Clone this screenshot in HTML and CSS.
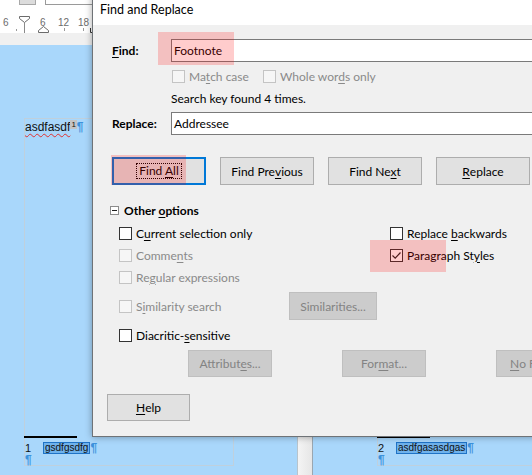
FILE: index.html
```
<!DOCTYPE html>
<html>
<head>
<meta charset="utf-8">
<link rel="stylesheet" href="styles.css">
</head>
<body>
<div class="screen">
  <div class="topbar">
    <span class="tb-btn"></span>
    <span class="tb-field"></span>
  </div>
  <div class="ruler">
    <span class="rl-num n1">6</span>
    <span class="rl-num n2">6</span>
    <span class="rl-num n3">12</span>
    <span class="rl-num n4">18</span>
    <svg class="rl-marks" width="92" height="17" viewBox="0 0 92 17">
      <path d="M19.5 0.5 H29.5 V2.5 L24.5 6.5 L19.5 2.5 Z" fill="#fff" stroke="#6b6b6b"/>
      <path d="M24.5 6.5 V17" stroke="#8a8a8a"/>
      <path d="M38.5 16.5 H48.5 V14.5 L43.5 10.5 L38.5 14.5 Z" fill="#fff" stroke="#6b6b6b"/>
      <path d="M64.5 12 V15 M83.5 12 V15 M16.5 13 V15" stroke="#9a9a9a"/>
      <path d="M90.5 12 V16.5 H92" stroke="#333" fill="none"/>
    </svg>
  </div>
  <div class="rulerfoot"></div>
  <div class="doc">
    <div class="page p1">
      <div class="ptext"><span class="wavy">asdfasdf</span><span class="fn-anchor">1</span><span class="pil">¶</span></div>
      <div class="footnotes">
        <div class="fn-sep"></div>
        <div class="fn-line"><span class="fn-num">1</span><span class="sel">gsdfgsdfg</span><span class="pil">¶</span></div>
        <div class="fn-line"><span class="pil">¶</span></div>
      </div>
    </div>
    <div class="pagegap"></div>
    <div class="page p2">
      <div class="ptext"></div>
      <div class="footnotes">
        <div class="fn-sep"></div>
        <div class="fn-line"><span class="fn-num">2</span><span class="sel">asdfgasasdgas</span><span class="pil">¶</span></div>
        <div class="fn-line"><span class="pil">¶</span></div>
      </div>
    </div>
  </div>

  <div class="dialog">
    <div class="titlebar">Find and Replace</div>
    <div class="dbody">
      <div class="frow">
        <span class="flabel"><u>F</u>ind:</span>
        <div class="field">Footnote</div>
      </div>
      <div class="optrow">
        <span class="chk mc"><span class="box dis"></span><span class="dtxt">Ma<u>t</u>ch case</span></span>
        <span class="chk"><span class="box dis"></span><span class="dtxt">Whole wor<u>d</u>s only</span></span>
      </div>
      <div class="status">Search key found 4 times.</div>
      <div class="frow">
        <span class="flabel">Replace:</span>
        <div class="field">Addressee</div>
      </div>
      <div class="btnrow">
        <span class="btn focus"><span class="focusring">Find <u>A</u>ll</span></span>
        <span class="btn">Find Pre<u>v</u>ious</span>
        <span class="btn">Find Ne<u>x</u>t</span>
        <span class="btn"><u>R</u>eplace</span>
      </div>
      <div class="section"><span class="minus"></span><span class="sect-title">Other <u>o</u>ptions</span></div>
      <div class="checks">
        <span class="chk c1 r1"><span class="box"></span><span>C<u>u</u>rrent selection only</span></span>
        <span class="chk c3 r1"><span class="box"></span><span>Replace <u>b</u>ackwards</span></span>
        <span class="chk c1 r2"><span class="box dis"></span><span class="dtxt">Comme<u>n</u>ts</span></span>
        <span class="chk c3 r2"><span class="box"><svg width="11" height="11" viewBox="0 0 11 11"><path d="M1.5 5.5 L4.2 8.2 L9.5 2.5" fill="none" stroke="#222" stroke-width="1.2"/></svg></span><span>Paragraph St<u>y</u>les</span></span>
        <span class="chk c1 r3"><span class="box dis"></span><span class="dtxt">Re<u>g</u>ular expressions</span></span>
        <span class="chk c1 r4"><span class="box dis"></span><span class="dtxt">S<u>i</u>milarity search</span></span>
        <span class="btn dbtn sim c2 r4">Similarities...</span>
        <span class="chk c1 r5"><span class="box"></span><span>Diacritic-<u>s</u>ensitive</span></span>
      </div>
      <div class="btnrow2">
        <span class="btn dbtn b2">Attribut<u>e</u>s...</span>
        <span class="btn dbtn b2">For<u>m</u>at...</span>
        <span class="btn dbtn b2 nof"><u>N</u>o Format</span>
      </div>
      <div class="helprow">
        <span class="btn help"><u>H</u>elp</span>
      </div>
    </div>
    <div class="hl hl1"></div>
    <div class="hl hl2"></div>
    <div class="hl hl3"></div>
  </div>
</div>
</body>
</html>
```

FILE: styles.css
```
* { box-sizing: border-box; }
html, body { margin: 0; padding: 0; }
body { background: #a9d7fb; }
.screen {
  position: relative;
  width: 532px;
  height: 475px;
  overflow: hidden;
  font-family: Lato, "Open Sans", sans-serif;
  font-size: 12px;
  color: #000;
}
u { text-decoration-thickness: 1px; text-underline-offset: 2px; }

/* app chrome behind */
.topbar {
  height: 16px;
  background: #fff;
  display: flex;
  align-items: flex-start;
}
.tb-btn {
  margin-left: 19px;
  width: 17px;
  height: 5px;
  background: #dcdcdc;
  border: 1px solid #a8a8a8;
  border-top: none;
}
.tb-field {
  margin-left: 9px;
  width: 60px;
  height: 5px;
  background: #fff;
  border-left: 1px solid #9a9a9a;
  border-bottom: 1px solid #9a9a9a;
}
.ruler {
  position: relative;
  height: 17px;
  background: #fff;
}
.rl-num {
  position: absolute;
  top: 2px;
  font-family: "Liberation Sans", sans-serif;
  font-size: 10px;
  line-height: 10px;
  color: #6c6c6c;
}
.n1 { left: 3px; }
.n2 { left: 40px; }
.n3 { left: 58px; }
.n4 { left: 78px; }
.rl-marks { position: absolute; left: 0; top: 0; }
.rulerfoot { height: 12px; background: #f0f0f0; }

.doc {
  height: 430px;
  background: #a9d7fb;
  display: flex;
  align-items: flex-start;
}
.page {
  flex: none;
  margin-top: 73px;
  height: 348px;
  border: 1px solid #bfd0dd;
  display: flex;
  flex-direction: column;
  justify-content: space-between;
  font-family: "Liberation Sans", sans-serif;
}
.p1 { margin-left: 24px; width: 210px; }
.p2 { margin-left: 64px; width: 200px; border-right: none; }
.pagegap {
  flex: none;
  margin-left: 63px;
  width: 16px;
  height: 430px;
  background: linear-gradient(to right, #f4f4f4, #e6e6e6);
  border-left: 1px solid #b8c4cc;
  border-right: 1px solid #9aa6b0;
}
.ptext {
  padding-top: 1px;
  font-size: 12px;
  line-height: 14px;
  color: #111;
  white-space: nowrap;
}
.wavy {
  text-decoration: underline wavy #e03030;
  text-decoration-thickness: 1px;
  text-underline-offset: 2px;
  text-decoration-skip-ink: none;
}
.fn-anchor {
  display: inline-block;
  background: #c4c4c4;
  font-size: 8px;
  line-height: 9px;
  vertical-align: 4px;
  padding: 0 1px;
}
.pil { color: #3d92dc; font-weight: bold; font-size: 12px; }
.footnotes { display: flex; flex-direction: column; }
.fn-sep { width: 53px; height: 2px; background: #000; margin-left: -1px; }
.fn-line {
  display: flex;
  align-items: center;
  font-size: 10px;
  line-height: 10px;
  color: #111;
  height: 11px;
  white-space: nowrap;
}
.fn-sep + .fn-line { margin-top: 4px; height: 12px; }
.fn-num { width: 18px; font-size: 11px; }
.sel {
  background: #6fb2ec;
  border: 1px solid #1f73c6;
  padding: 0 1px;
  height: 12px;
  line-height: 10px;
}

/* dialog */
.dialog {
  position: absolute;
  left: 92px;
  top: -6px;
  width: 480px;
  border: 1px solid #6f7377;
  background: #f0f0f0;
  box-shadow: 0 0 7px rgba(0, 0, 0, 0.35);
}
.titlebar {
  height: 30px;
  background: #fff;
  padding-left: 7px;
  line-height: 30px;
  font-size: 12.5px;
}
.dbody {
  padding: 14px 0 15px 19px;
  display: flex;
  flex-direction: column;
  align-items: flex-start;
}
.frow {
  display: grid;
  grid-template-columns: 59px 1fr;
  align-items: center;
  height: 23px;
  width: 100%;
}
.flabel { font-weight: bold; }
.field {
  height: 23px;
  border: 1px solid #7a7a7a;
  background: #fff;
  padding-left: 2px;
  line-height: 21px;
}
.optrow {
  margin-top: 7px;
  margin-left: 60px;
  height: 14px;
  display: flex;
  align-items: center;
}
.chk { display: flex; align-items: center; gap: 4px; white-space: nowrap; }
.mc { width: 91px; }
.box {
  width: 13px;
  height: 13px;
  flex: none;
  border: 1px solid #333;
  background: #fff;
  display: flex;
  align-items: center;
  justify-content: center;
}
.box.dis { border-color: #c4c4c4; background: #f6f6f6; }
.dtxt { color: #8a8a8a; }
.status {
  margin-top: 7px;
  margin-left: 59px;
  height: 18px;
  line-height: 18px;
}
.status + .frow { margin-top: 4px; }
.btnrow { display: flex; gap: 14px; margin-top: 22px; }
.btn {
  flex: none;
  width: 94px;
  height: 28px;
  background: #e1e1e1;
  border: 1px solid #adadad;
  display: flex;
  align-items: center;
  justify-content: center;
  white-space: nowrap;
  overflow: hidden;
}
.btn.focus { border: 2px solid #0078d7; }
.focusring {
  border: 1px dotted #000;
  padding: 0 2px;
  line-height: 14px;
}
.dbtn { background: #cccccc; border-color: #bfbfbf; color: #838383; }
.section {
  margin-top: 17px;
  margin-left: -2px;
  height: 16px;
  display: flex;
  align-items: center;
  gap: 5px;
}
.minus {
  width: 9px;
  height: 9px;
  border: 1px solid #8c8c8c;
  background: #fff;
  display: flex;
  align-items: center;
  justify-content: center;
}
.minus::after {
  content: "";
  width: 5px;
  height: 1px;
  background: #1e1e1e;
}
.sect-title { font-weight: bold; }
.checks {
  margin-top: 4px;
  margin-left: 7px;
  display: grid;
  grid-template-columns: 170px 101px 150px;
  grid-template-rows: 22px 22px 22px 36px 22px;
  align-items: center;
}
.c1 { grid-column: 1; }
.c2 { grid-column: 2; }
.c3 { grid-column: 3; }
.r1 { grid-row: 1; }
.r2 { grid-row: 2; }
.r3 { grid-row: 3; }
.r4 { grid-row: 4; }
.r5 { grid-row: 5; }
.sim { width: 88px; height: 28px; }
.btnrow2 {
  margin-top: 4px;
  margin-left: 76px;
  display: flex;
  gap: 70px;
}
.b2 { width: 84px; height: 27px; }
.nof { justify-content: flex-start; padding-left: 13px; }
.helprow { margin-top: 17px; margin-left: -5px; }
.help { width: 83px; height: 27px; }

.hl {
  position: absolute;
  background: rgba(255, 0, 0, 0.2);
  pointer-events: none;
}
.hl1 { left: 65px; top: 37px; width: 76px; height: 33px; }
.hl2 { left: 18px; top: 160px; width: 75px; height: 30px; }
.hl3 { left: 277px; top: 245px; width: 76px; height: 32px; }
```
